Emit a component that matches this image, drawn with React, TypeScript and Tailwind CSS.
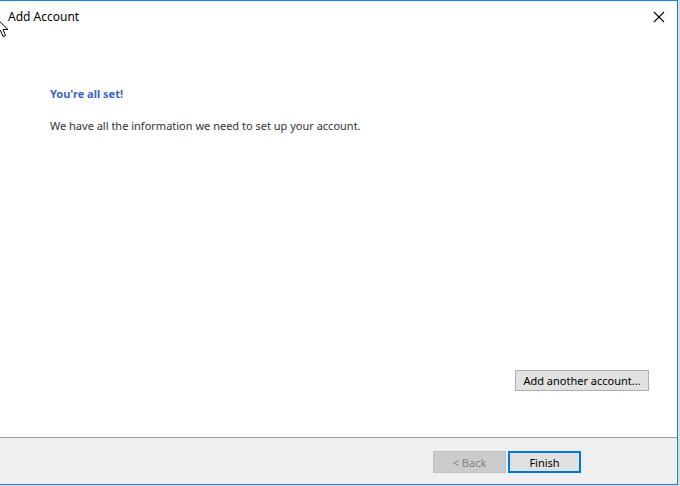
export default function App() {
  return (
    <div
      className="relative w-[680px] h-[486px] bg-[#d9dde2] overflow-hidden"
      style={{ fontFamily: '"Noto Sans", "Open Sans", sans-serif' }}
    >
      <div className="flex flex-col w-[678px] h-[485px] bg-white border-t border-r border-b border-[#1883d7]">
        {/* title bar */}
        <div className="flex items-center justify-between h-[31px] pl-[8px] pr-[12px]">
          <span className="text-[12px] text-black leading-none">Add Account</span>
          <svg width="12" height="12" viewBox="0 0 12 12" className="text-black">
            <path d="M1 1 L11 11 M11 1 L1 11" stroke="currentColor" strokeWidth="1.1" />
          </svg>
        </div>

        {/* content */}
        <div className="flex flex-col flex-1 pl-[50px] pt-[54px]">
          <p className="text-[11px] font-bold text-[#3c64c8] leading-[16px]">You're all set!</p>
          <p className="mt-[16px] text-[11px] text-[#333333] leading-[16px]">
            We have all the information we need to set up your account.
          </p>
          <div className="flex-1" />
          <div className="flex justify-end pr-[28px] pb-[46px]">
            <button className="w-[134px] h-[21px] bg-[#e1e1e1] border border-[#adadad] text-[11px] text-black leading-none">
              Add another account...
            </button>
          </div>
        </div>

        {/* footer */}
        <div className="flex justify-end gap-[2px] h-[47px] pt-[13px] pr-[96px] bg-[#f0f0f0] border-t border-[#a0a0a0]">
          <button className="w-[73px] h-[22px] bg-[#cccccc] border border-[#bfbfbf] text-[11px] text-[#838383] leading-none">
            &lt; Back
          </button>
          <button className="w-[73px] h-[22px] bg-[#e1e1e1] border-2 border-[#0078d7] text-[11px] text-black leading-none">
            Finish
          </button>
        </div>
      </div>

      {/* mouse pointer */}
      <svg className="absolute left-[-4px] top-[18px]" width="14" height="20" viewBox="0 0 14 20">
        <path d="M1 1 L1 16 L4.5 12.5 L7 18.5 L9.5 17.5 L7 11.5 L12 11.5 Z" fill="white" stroke="black" strokeWidth="1" />
      </svg>
    </div>
  );
}
